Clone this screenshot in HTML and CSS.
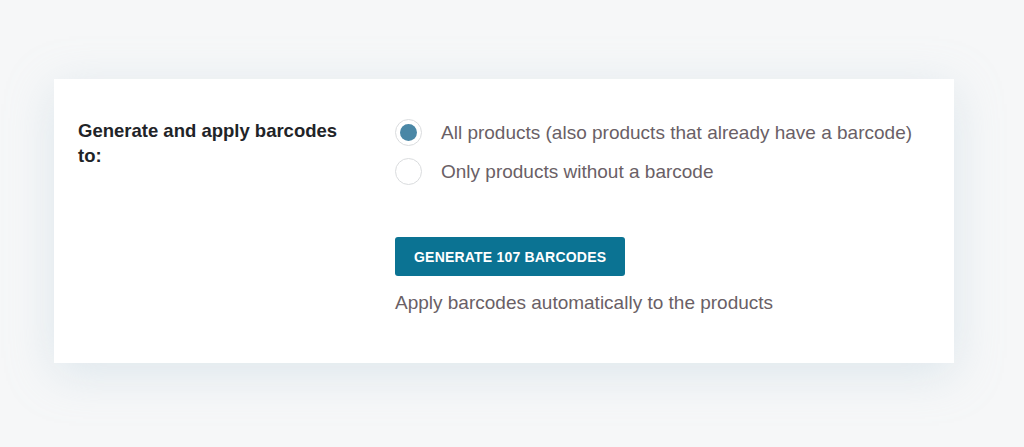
FILE: index.html
```html
<!DOCTYPE html>
<html lang="en">
<head>
<meta charset="utf-8">
<title>Generate barcodes</title>
<link rel="stylesheet" href="styles.css">
</head>
<body>
<div class="page">
  <section class="card">
    <div class="label">Generate and apply barcodes to:</div>
    <div class="field">
      <div class="options">
        <label class="option">
          <span class="radio checked"><span class="dot"></span></span>
          <span class="option-text">All products (also products that already have a barcode)</span>
        </label>
        <label class="option">
          <span class="radio"></span>
          <span class="option-text">Only products without a barcode</span>
        </label>
      </div>
      <button class="btn" type="button">GENERATE 107 BARCODES</button>
      <p class="desc">Apply barcodes automatically to the products</p>
    </div>
  </section>
</div>
</body>
</html>
```

FILE: styles.css
```css
html, body {
  margin: 0;
  padding: 0;
}
body {
  width: 1024px;
  height: 447px;
  overflow: hidden;
  background: #f6f7f8;
  font-family: "Liberation Sans", Arial, sans-serif;
}
.page {
  padding: 79px 0 0 54px;
}
.card {
  box-sizing: border-box;
  width: 900px;
  height: 284px;
  background: #ffffff;
  box-shadow: 0 10px 44px rgba(175, 200, 215, 0.35);
  display: grid;
  grid-template-columns: 317px 1fr;
  padding: 34px 0 0 24px;
}
.label {
  margin-top: 5px;
  font-size: 18.5px;
  line-height: 25px;
  font-weight: bold;
  color: #1f2428;
  width: 265px;
}
.field {
  display: flex;
  flex-direction: column;
  align-items: flex-start;
}
.options {
  display: flex;
  flex-direction: column;
}
.option {
  display: flex;
  align-items: center;
  height: 39px;
  gap: 19px;
}
.radio {
  box-sizing: border-box;
  width: 27px;
  height: 27px;
  border-radius: 50%;
  border: 1.5px solid #dadcde;
  background: #fff;
  display: flex;
  align-items: center;
  justify-content: center;
}
.dot {
  width: 17px;
  height: 17px;
  border-radius: 50%;
  background: #4a87a6;
}
.option-text {
  font-size: 19px;
  color: #6a5f66;
}
.btn {
  margin-top: 46px;
  height: 39px;
  padding: 0 19px;
  border: none;
  border-radius: 3px;
  background: #0b7393;
  color: #ffffff;
  font-family: "Liberation Sans", Arial, sans-serif;
  font-weight: bold;
  font-size: 14px;
  letter-spacing: 0.2px;
}
.desc {
  margin: 15px 0 0;
  font-size: 19px;
  line-height: 24px;
  color: #6a5f66;
}
```
